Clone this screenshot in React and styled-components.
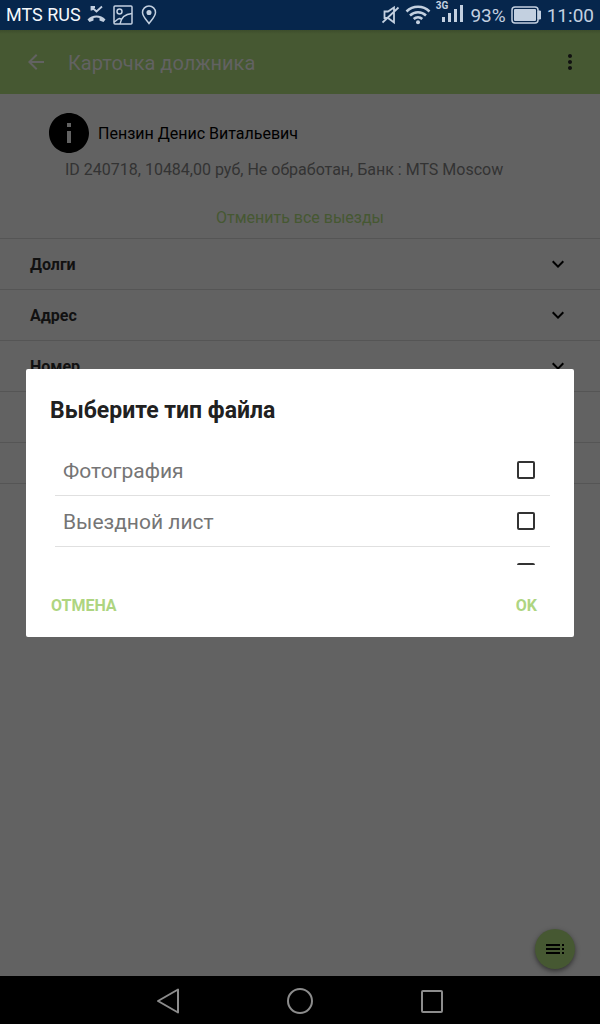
import React from "react";
import styled, { createGlobalStyle } from "styled-components";
import {
  MdArrowBack,
  MdExpandMore,
  MdInfo,
  MdMoreVert,
  MdToc,
} from "react-icons/md";

const GlobalStyle = createGlobalStyle`
  *, *::before, *::after { box-sizing: border-box; }
  body {
    margin: 0;
    background: #626262;
    font-family: Roboto, "Noto Sans", sans-serif;
  }
  button {
    border: 0;
    padding: 0;
    background: none;
    color: inherit;
    font: inherit;
  }
`;

const Screen = styled.div`
  display: flex;
  flex-direction: column;
  min-height: 100vh;
`;

const StatusBar = styled.header`
  display: flex;
  align-items: center;
  justify-content: space-between;
  height: 30px;
  padding: 0 6px;
  background: #06264c;
  color: #c3d0e0;
`;

const StatusGroup = styled.div`
  display: flex;
  align-items: center;
  gap: ${(p) => p.$gap}px;
  height: 28px;
`;

const Carrier = styled.span`
  color: #f4f8fc;
  font-size: 18px;
  line-height: 28px;
`;

const StatusText = styled.span`
  padding-top: 2px;
  font-size: 19px;
  line-height: 28px;
`;

const StatusIcon = styled.svg`
  display: block;
  flex: none;
  fill: none;
  stroke: currentColor;
`;

const Network = styled.span`
  display: flex;
  align-items: flex-start;
  height: 30px;
  padding-bottom: 8px;
  margin-right: 2px;

  svg {
    align-self: flex-end;
    margin-left: -6px;
  }
`;

const NetworkLabel = styled.span`
  font-size: 10px;
  font-weight: 700;
  line-height: 12px;
`;

const Body = styled.div`
  position: relative;
  display: flex;
  flex: 1;
  flex-direction: column;
`;

const AppBar = styled.div`
  display: flex;
  align-items: center;
  gap: 20px;
  height: 64px;
  padding: 0 18px 0 24px;
  background: linear-gradient(#3c4d2c, #465832 4px);
  color: #626262;
`;

const AppTitle = styled.h1`
  flex: 1;
  margin: 0;
  padding-top: 2px;
  font-size: 20px;
  font-weight: 400;
  line-height: 28px;
`;

const IconButton = styled.button`
  display: flex;
  color: ${(p) => p.$color};
`;

const Debtor = styled.section`
  display: flex;
  flex-direction: column;
  padding: 15px 30px 8px 45px;
`;

const DebtorHead = styled.div`
  display: flex;
  align-items: center;
  gap: 5px;
  color: #000;
`;

const DebtorName = styled.h2`
  margin: 0;
  padding-top: 2px;
  font-size: 16px;
  font-weight: 400;
  line-height: 24px;
`;

const DebtorInfo = styled.p`
  margin: 1px 0 0 20px;
  color: #333;
  font-size: 16px;
  line-height: 24px;
`;

const CancelRow = styled.div`
  display: flex;
  justify-content: center;
  margin: 24px 0 0 -15px;
`;

const CancelTrips = styled.button`
  color: #465832;
  font-size: 16px;
  line-height: 24px;
`;

const Sections = styled.div`
  border-top: 1px solid #555;
`;

const Section = styled.button`
  display: flex;
  align-items: center;
  justify-content: space-between;
  width: 100%;
  height: ${(p) => p.$height || 51}px;
  padding: 0 30px;
  border-bottom: 1px solid #555;
  color: #111;
  font-size: 16px;
  font-weight: 700;
  text-align: left;
`;

const Fab = styled.button`
  position: absolute;
  right: 25px;
  bottom: 7px;
  display: flex;
  align-items: center;
  justify-content: center;
  width: 40px;
  height: 40px;
  border-radius: 50%;
  background: #465832;
  color: #000;
  box-shadow: 0 2px 5px rgba(0, 0, 0, 0.5);
`;

const Overlay = styled.div`
  position: absolute;
  inset: 0;
  display: flex;
  align-items: center;
  padding: 0 26px;
`;

const Dialog = styled.div`
  flex: 1;
  min-width: 0;
  padding: 26px 24px 15px;
  border-radius: 2px;
  background: #fff;
`;

const DialogTitle = styled.h2`
  margin: 0;
  color: #212121;
  font-size: 23px;
  font-weight: 700;
  line-height: 32px;
`;

const Options = styled.div`
  height: 120px;
  margin: 18px 0 25px 5px;
  overflow: hidden;
`;

const Option = styled.label`
  display: flex;
  align-items: center;
  justify-content: space-between;
  height: 51px;
  padding: 0 15px 0 8px;
  border-bottom: 1px solid #e0e0e0;
`;

const OptionName = styled.span`
  padding-top: 2px;
  color: #757575;
  font-size: 21px;
  line-height: 28px;
`;

const CheckBox = styled.input.attrs({ type: "checkbox" })`
  appearance: none;
  width: 18px;
  height: 18px;
  margin: 0;
  border: 2px solid #333;
  border-radius: 2px;
`;

const Actions = styled.div`
  display: flex;
  justify-content: space-between;
  padding: 0 13px 0 1px;
`;

const Action = styled.button`
  color: #aed581;
  font-size: 16px;
  font-weight: 700;
  line-height: 32px;
`;

const NavBar = styled.nav`
  display: flex;
  align-items: center;
  justify-content: center;
  gap: 100px;
  height: 48px;
  padding-top: 2px;
  background: #000;
  color: #8c8c8c;
`;

const SECTIONS = [
  { name: "Долги" },
  { name: "Адрес" },
  { name: "Номер" },
  { height: 51 },
  { height: 41 },
];
const FILE_TYPES = ["Фотография", "Выездной лист", "Скан"];

function StatusIconsLeft() {
  return (
    <>
      <StatusIcon width="20" height="20" viewBox="0 0 20 20" strokeWidth="1.8">
        <path d="M4.500 5.500V2H8M4.500 2l5 4.500L15 1.500" />
        <path d="M.5 14.500C5 9 14 9 18.500 14.500L16.500 17l-4-1.500v-2.500c-2-.7-4-.7-6 0v2.500L2.500 17z" fill="currentColor" strokeWidth="0" />
      </StatusIcon>
      <StatusIcon width="20" height="20" viewBox="0 0 20 20" strokeWidth="1.5">
        <rect x="1" y="1" width="18" height="18" rx="1" />
        <circle cx="6.500" cy="6.500" r="2.500" />
        <path d="M7 19C8 12.500 12 9 19 8.500M1 17c2-.8 3-3 5.500-3.500l2 .8" />
      </StatusIcon>
      <StatusIcon width="20" height="20" viewBox="0 0 20 20" strokeWidth="1.5">
        <path d="M10 18.500C6.500 14 3.500 11 3.500 7.500a6.500 6.500 0 0 1 13 0C16.500 11 13.500 14 10 18.500z" />
        <circle cx="10" cy="7.500" r="1.800" fill="currentColor" />
      </StatusIcon>
    </>
  );
}

function StatusIconsRight() {
  return (
    <>
      <StatusIcon width="18" height="20" viewBox="0 0 18 20" strokeWidth="1.8">
        <path d="M2.500 6.500H6l6-4v15l-6-4.500H2.500zM.5 17.500L16.500 2.500" />
      </StatusIcon>
      <StatusIcon width="26" height="20" viewBox="0 0 26 20" strokeWidth="2.500">
        <path d="M1.500 6.500a16.500 16.500 0 0 1 23 0M5 10.500a11.500 11.500 0 0 1 16 0M8.700 14a6.500 6.500 0 0 1 8.600 0" />
        <circle cx="13" cy="17.200" r="2" fill="currentColor" strokeWidth="0" />
      </StatusIcon>
      <Network>
        <NetworkLabel>3G</NetworkLabel>
        <StatusIcon width="21" height="18" viewBox="0 0 21 18" strokeWidth="3">
          <path d="M1.500 18v-5M7.500 18v-9M13.500 18V5M19.500 18V1" />
        </StatusIcon>
      </Network>
      <StatusText>93%</StatusText>
      <StatusIcon width="31" height="18" viewBox="0 0 31 18" strokeWidth="1.5">
        <rect x="1" y="1" width="26" height="16" rx="3" />
        <rect x="3" y="3" width="22" height="12" rx="1" fill="currentColor" strokeWidth="0" />
        <path d="M27 5h2.500v8H27z" fill="currentColor" strokeWidth="1" />
      </StatusIcon>
    </>
  );
}

export default function App() {
  return (
    <Screen>
      <GlobalStyle />
      <StatusBar>
        <StatusGroup $gap={6}>
          <Carrier>MTS RUS</Carrier>
          <StatusIconsLeft />
        </StatusGroup>
        <StatusGroup $gap={5}>
          <StatusIconsRight />
          <StatusText>11:00</StatusText>
        </StatusGroup>
      </StatusBar>

      <Body>
        <AppBar>
          <IconButton $color="#626262" aria-label="Назад">
            <MdArrowBack size={24} />
          </IconButton>
          <AppTitle>Карточка должника</AppTitle>
          <IconButton $color="#111" aria-label="Меню">
            <MdMoreVert size={24} />
          </IconButton>
        </AppBar>

        <Debtor>
          <DebtorHead>
            <MdInfo size={48} />
            <DebtorName>Пензин Денис Витальевич</DebtorName>
          </DebtorHead>
          <DebtorInfo>
            ID 240718, 10484,00 руб, Не обработан, Банк : MTS Moscow
          </DebtorInfo>
          <CancelRow>
            <CancelTrips>Отменить все выезды</CancelTrips>
          </CancelRow>
        </Debtor>

        <Sections>
          {SECTIONS.map((s, i) => (
            <Section key={i} $height={s.height}>
              {s.name}
              {s.name && <MdExpandMore size={24} color="#000" />}
            </Section>
          ))}
        </Sections>

        <Fab aria-label="Список">
          <MdToc size={24} />
        </Fab>

        <Overlay>
          <Dialog role="dialog" aria-labelledby="dialog-title">
            <DialogTitle id="dialog-title">Выберите тип файла</DialogTitle>
            <Options>
              {FILE_TYPES.map((name) => (
                <Option key={name}>
                  <OptionName>{name}</OptionName>
                  <CheckBox />
                </Option>
              ))}
            </Options>
            <Actions>
              <Action>ОТМЕНА</Action>
              <Action>OK</Action>
            </Actions>
          </Dialog>
        </Overlay>
      </Body>

      <NavBar>
        <IconButton aria-label="Назад">
          <StatusIcon width="32" height="28" viewBox="0 0 32 28" strokeWidth="2" strokeLinejoin="round">
            <path d="M6 14L26 2.500v23z" />
          </StatusIcon>
        </IconButton>
        <IconButton aria-label="Домой">
          <StatusIcon width="32" height="28" viewBox="0 0 32 28" strokeWidth="2">
            <circle cx="16" cy="14" r="12" />
          </StatusIcon>
        </IconButton>
        <IconButton aria-label="Недавние">
          <StatusIcon width="32" height="28" viewBox="0 0 32 28" strokeWidth="2">
            <rect x="6" y="4" width="20" height="21" rx="1" />
          </StatusIcon>
        </IconButton>
      </NavBar>
    </Screen>
  );
}
